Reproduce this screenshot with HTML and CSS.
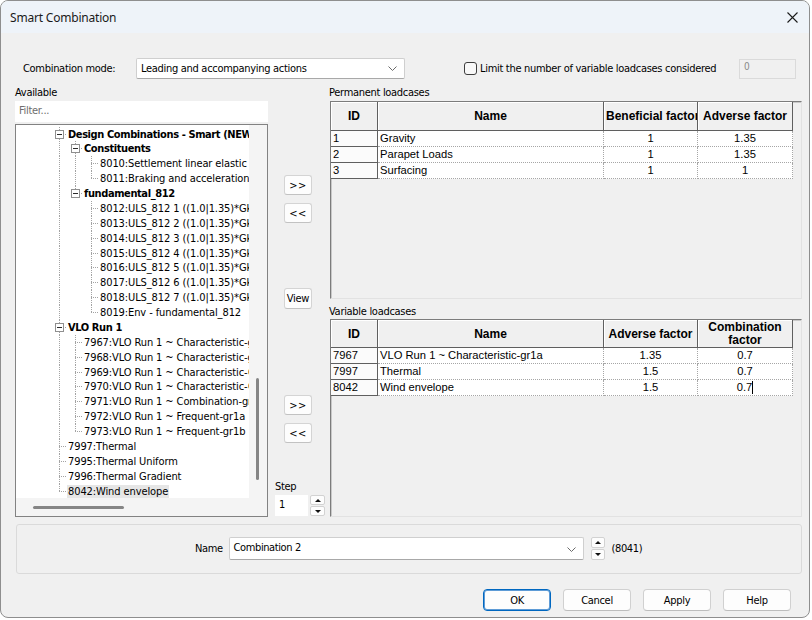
FILE: index.html
```html
<!DOCTYPE html>
<html lang="en">
<head>
    <meta charset="UTF-8">
    <title>Smart Combination</title>
    <link rel="stylesheet" href="styles.css">
</head>
<body>
<div class="window">
    <div class="titlebar">
        <span class="title">Smart Combination</span>
        <svg class="close" width="11" height="11" viewBox="0 0 11 11">
            <path d="M0.5 0.5 L10.5 10.5 M10.5 0.5 L0.5 10.5" stroke="#1b1b1b" stroke-width="1.1" fill="none"/>
        </svg>
    </div>

    <div class="body">
        <div class="mode-row">
            <span class="mode-label">Combination mode:</span>
            <div class="select">
                <span>Leading and accompanying actions</span>
                <svg width="9" height="5" viewBox="0 0 9 5"><path d="M0.5 0.5 L4.5 4.5 L8.5 0.5" stroke="#6a6a6a" fill="none"/></svg>
            </div>
            <span class="checkbox"></span>
            <span class="check-label">Limit the number of variable loadcases considered</span>
            <div class="limit-input">0</div>
        </div>

        <div class="main">
            <div class="col-left">
                <div class="label">Available</div>
                <div class="filter">Filter...</div>
                <div class="tree">
                    <div class="tree-list">
                        <div class="row"><i class="g"></i><i class="g"></i><i class="n tee"><b class="box"></b></i><span class="t bold">Design Combinations - Smart (NEW)</span></div>
                        <div class="row"><i class="g"></i><i class="g"></i><i class="g v"></i><i class="n tee"><b class="box"></b></i><span class="t bold">Constituents</span></div>
                        <div class="row"><i class="g"></i><i class="g"></i><i class="g v"></i><i class="g v"></i><i class="n tee"></i><span class="t">8010:Settlement linear elastic analysis</span></div>
                        <div class="row"><i class="g"></i><i class="g"></i><i class="g v"></i><i class="g v"></i><i class="n end"></i><span class="t">8011:Braking and acceleration Envelope</span></div>
                        <div class="row"><i class="g"></i><i class="g"></i><i class="g v"></i><i class="n end"><b class="box"></b></i><span class="t bold">fundamental_812</span></div>
                        <div class="row"><i class="g"></i><i class="g"></i><i class="g v"></i><i class="g"></i><i class="n tee"></i><span class="t">8012:ULS_812 1 ((1.0|1.35)*Gk</span></div>
                        <div class="row"><i class="g"></i><i class="g"></i><i class="g v"></i><i class="g"></i><i class="n tee"></i><span class="t">8013:ULS_812 2 ((1.0|1.35)*Gk</span></div>
                        <div class="row"><i class="g"></i><i class="g"></i><i class="g v"></i><i class="g"></i><i class="n tee"></i><span class="t">8014:ULS_812 3 ((1.0|1.35)*Gk</span></div>
                        <div class="row"><i class="g"></i><i class="g"></i><i class="g v"></i><i class="g"></i><i class="n tee"></i><span class="t">8015:ULS_812 4 ((1.0|1.35)*Gk</span></div>
                        <div class="row"><i class="g"></i><i class="g"></i><i class="g v"></i><i class="g"></i><i class="n tee"></i><span class="t">8016:ULS_812 5 ((1.0|1.35)*Gk</span></div>
                        <div class="row"><i class="g"></i><i class="g"></i><i class="g v"></i><i class="g"></i><i class="n tee"></i><span class="t">8017:ULS_812 6 ((1.0|1.35)*Gk</span></div>
                        <div class="row"><i class="g"></i><i class="g"></i><i class="g v"></i><i class="g"></i><i class="n tee"></i><span class="t">8018:ULS_812 7 ((1.0|1.35)*Gk</span></div>
                        <div class="row"><i class="g"></i><i class="g"></i><i class="g v"></i><i class="g"></i><i class="n end"></i><span class="t">8019:Env - fundamental_812</span></div>
                        <div class="row"><i class="g"></i><i class="g"></i><i class="n tee"><b class="box"></b></i><span class="t bold">VLO Run 1</span></div>
                        <div class="row"><i class="g"></i><i class="g"></i><i class="g v"></i><i class="n tee"></i><span class="t">7967:VLO Run 1 ~ Characteristic-gr1a</span></div>
                        <div class="row"><i class="g"></i><i class="g"></i><i class="g v"></i><i class="n tee"></i><span class="t">7968:VLO Run 1 ~ Characteristic-gr1b</span></div>
                        <div class="row"><i class="g"></i><i class="g"></i><i class="g v"></i><i class="n tee"></i><span class="t">7969:VLO Run 1 ~ Characteristic-Gr2</span></div>
                        <div class="row"><i class="g"></i><i class="g"></i><i class="g v"></i><i class="n tee"></i><span class="t">7970:VLO Run 1 ~ Characteristic-Gr3</span></div>
                        <div class="row"><i class="g"></i><i class="g"></i><i class="g v"></i><i class="n tee"></i><span class="t">7971:VLO Run 1 ~ Combination-gr1a</span></div>
                        <div class="row"><i class="g"></i><i class="g"></i><i class="g v"></i><i class="n tee"></i><span class="t">7972:VLO Run 1 ~ Frequent-gr1a</span></div>
                        <div class="row"><i class="g"></i><i class="g"></i><i class="g v"></i><i class="n end"></i><span class="t">7973:VLO Run 1 ~ Frequent-gr1b</span></div>
                        <div class="row"><i class="g"></i><i class="g"></i><i class="n tee"></i><span class="t">7997:Thermal</span></div>
                        <div class="row"><i class="g"></i><i class="g"></i><i class="n tee"></i><span class="t">7995:Thermal Uniform</span></div>
                        <div class="row"><i class="g"></i><i class="g"></i><i class="n tee"></i><span class="t">7996:Thermal Gradient</span></div>
                        <div class="row"><i class="g"></i><i class="g"></i><i class="n end"></i><span class="t selected">8042:Wind envelope</span></div>
                    </div>
                    <div class="vscroll"><div class="vthumb"></div></div>
                    <div class="hscroll"><div class="hthumb"></div></div>
                    <div class="corner"></div>
                </div>
            </div>

            <div class="col-mid">
                <button class="small-btn first">&gt;&gt;</button>
                <button class="small-btn near">&lt;&lt;</button>
                <button class="small-btn view">View</button>
                <button class="small-btn lower">&gt;&gt;</button>
                <button class="small-btn near">&lt;&lt;</button>
                <div class="step-label">Step</div>
                <div class="step-row">
                    <div class="step-input">1</div>
                    <div class="spin">
                        <span class="spin-up"></span>
                        <span class="spin-down"></span>
                    </div>
                </div>
            </div>

            <div class="col-right">
                <div class="label">Permanent loadcases</div>
                <div class="grid-box">
                    <div class="grid perm">
                        <div class="hd">ID</div>
                        <div class="hd">Name</div>
                        <div class="hd">Beneficial factor</div>
                        <div class="hd">Adverse factor</div>

                        <div class="rh">1</div><div class="cl">Gravity</div><div class="cl num">1</div><div class="cl num">1.35</div>
                        <div class="rh">2</div><div class="cl">Parapet Loads</div><div class="cl num">1</div><div class="cl num">1.35</div>
                        <div class="rh">3</div><div class="cl">Surfacing</div><div class="cl num">1</div><div class="cl num">1</div>
                    </div>
                </div>

                <div class="label second">Variable loadcases</div>
                <div class="grid-box">
                    <div class="grid var">
                        <div class="hd">ID</div>
                        <div class="hd">Name</div>
                        <div class="hd">Adverse factor</div>
                        <div class="hd two">Combination<br>factor</div>

                        <div class="rh">7967</div><div class="cl">VLO Run 1 ~ Characteristic-gr1a</div><div class="cl num">1.35</div><div class="cl num">0.7</div>
                        <div class="rh">7997</div><div class="cl">Thermal</div><div class="cl num">1.5</div><div class="cl num">0.7</div>
                        <div class="rh">8042</div><div class="cl">Wind envelope</div><div class="cl num">1.5</div><div class="cl num">0.7<span class="caret"></span></div>
                    </div>
                </div>
            </div>
        </div>

        <div class="name-group">
            <span class="name-label">Name</span>
            <div class="name-combo">
                <span>Combination 2</span>
                <svg width="9" height="5" viewBox="0 0 9 5"><path d="M0.5 0.5 L4.5 4.5 L8.5 0.5" stroke="#6a6a6a" fill="none"/></svg>
            </div>
            <div class="spin name-spin">
                <span class="spin-up"></span>
                <span class="spin-down"></span>
            </div>
            <span class="name-id">(8041)</span>
        </div>

        <div class="buttons">
            <button class="btn default">OK</button>
            <button class="btn">Cancel</button>
            <button class="btn">Apply</button>
            <button class="btn">Help</button>
        </div>
    </div>
</div>
</body>
</html>
```

FILE: styles.css
```css
body {
    margin: 0;
    background: #ffffff;
    font-family: "DejaVu Sans Condensed", "DejaVu Sans", sans-serif;
    font-size: 11px;
    letter-spacing: -0.3px;
    color: #000;
}
.window {
    width: 808px;
    height: 616px;
    border: 1px solid #8e8e8e;
    border-radius: 8px;
    background: #f0f0f0;
    overflow: hidden;
    display: flex;
    flex-direction: column;
}
.titlebar {
    height: 32px;
    flex: none;
    background: #eef3f9;
    display: flex;
    align-items: center;
    justify-content: space-between;
    padding: 0 11px 0 9px;
}
.title {
    font-family: "Noto Sans", sans-serif;
    font-size: 12px;
    letter-spacing: -0.2px;
    color: #1a1a1a;
}
.body {
    flex: 1;
    display: flex;
    flex-direction: column;
    padding: 0 6px 0 14px;
}

/* top row */
.mode-row {
    margin-top: 25px;
    height: 21px;
    display: flex;
    align-items: center;
}
.mode-label {
    width: 113px;
    margin-left: 8px;
}
.select, .name-combo {
    box-sizing: border-box;
    height: 21px;
    background: #fff;
    border: 1px solid #cfcfcf;
    border-bottom-color: #a8a8a8;
    border-radius: 2px;
    display: flex;
    align-items: center;
    justify-content: space-between;
    padding: 0 7px 0 4px;
}
.select {
    width: 269px;
}
.checkbox {
    box-sizing: border-box;
    width: 13px;
    height: 13px;
    margin-left: 59px;
    border: 1px solid #3e3e3e;
    border-radius: 3px;
    background: #f8f8f8;
}
.check-label {
    margin-left: 3px;
}
.limit-input {
    box-sizing: border-box;
    width: 57px;
    height: 20px;
    margin-left: auto;
    margin-right: 7px;
    border: 1px solid #dadada;
    color: #8a8a8a;
    padding: 1px 0 0 4px;
    font-size: 10px;
    align-self: flex-start;
    margin-top: 1px;
}

/* main area */
.main {
    margin-top: 7px;
    height: 431px;
    display: flex;
}
.label {
    height: 15px;
    line-height: 14px;
}
.col-left {
    width: 253px;
    flex: none;
}
.filter {
    height: 21px;
    background: #fff;
    color: #6d6d6d;
    line-height: 19px;
    padding-left: 4px;
}
.tree {
    box-sizing: border-box;
    margin-top: 2px;
    height: 393px;
    border: 1px solid #828282;
    display: grid;
    grid-template-columns: 233px 1fr;
    grid-template-rows: 1fr 18px;
}
.tree-list {
    background: #fff;
    overflow: hidden;
    padding: 1.6px 0 0 3px;
    letter-spacing: -0.1px;
}
.row {
    height: 14.875px;
    display: flex;
    align-items: center;
    white-space: nowrap;
}
.g, .n {
    flex: none;
    width: 16px;
    height: 100%;
    display: flex;
    align-items: center;
    justify-content: center;
    background-repeat: no-repeat;
}
.v {
    background-image: repeating-linear-gradient(to bottom, #a3a3a3 0 1px, transparent 1px 2px);
    background-size: 1px 100%;
    background-position: 8px 0;
}
.tee, .end {
    background-image:
        repeating-linear-gradient(to bottom, #a3a3a3 0 1px, transparent 1px 2px),
        repeating-linear-gradient(to right, #a3a3a3 0 1px, transparent 1px 2px);
    background-size: 1px 100%, 8px 1px;
    background-position: 8px 0, 8px 7px;
}
.end {
    background-size: 1px 8px, 8px 1px;
}
.box {
    box-sizing: border-box;
    width: 9px;
    height: 9px;
    border: 1px solid #8f8f8f;
    background: linear-gradient(#2b2b2b, #2b2b2b) center / 5px 1px no-repeat, #fff;
}
.t {
    padding-left: 1px;
}
.bold {
    font-weight: bold;
    letter-spacing: -0.4px;
}
.selected {
    background: #e6e6e6;
    padding-right: 1px;
}
.vscroll, .hscroll, .corner {
    background: #f4f4f4;
}
.vthumb {
    width: 3px;
    height: 102px;
    margin: 253px 0 0 7px;
    background: #858585;
    border-radius: 2px;
}
.hthumb {
    width: 91px;
    height: 3px;
    margin: 8px 0 0 17px;
    background: #858585;
    border-radius: 2px;
}

/* middle buttons */
.col-mid {
    width: 61px;
    flex: none;
    display: flex;
    flex-direction: column;
    align-items: flex-start;
}
.small-btn {
    box-sizing: border-box;
    width: 28px;
    height: 20px;
    margin-left: 16px;
    padding: 0;
    background: #fdfdfd;
    border: 1px solid #d4d4d4;
    border-bottom-color: #c2c2c2;
    border-radius: 3px;
    font-family: inherit;
    font-size: 11px;
    letter-spacing: 0.5px;
    color: #000;
}
.small-btn.view { letter-spacing: -0.3px; }
.small-btn.first { margin-top: 89px; }
.small-btn.near { margin-top: 8px; }
.small-btn.view { margin-top: 65px; height: 21px; }
.small-btn.lower { margin-top: 86px; }
.step-label {
    margin: 37px 0 0 7px;
    height: 14px;
    line-height: 14px;
}
.step-row {
    display: flex;
    margin: 1px 0 0 7px;
}
.step-input {
    width: 29px;
    height: 21px;
    background: #fff;
    padding-left: 4px;
    line-height: 20px;
}
.spin {
    margin-left: 2px;
    width: 15px;
    display: flex;
    flex-direction: column;
    gap: 1px;
}
.spin-up, .spin-down {
    box-sizing: border-box;
    flex: 1;
    background: #fdfdfd;
    border: 1px solid #d2d2d2;
    border-radius: 2px;
    display: flex;
    align-items: center;
    justify-content: center;
}
.spin-up::before, .spin-down::before {
    content: "";
    border-left: 3px solid transparent;
    border-right: 3px solid transparent;
}
.spin-up::before { border-bottom: 3px solid #111; }
.spin-down::before { border-top: 3px solid #111; }

/* grids */
.col-right {
    width: 473px;
    flex: none;
}
.label.second {
    margin-top: 6px;
    height: 14px;
}
.grid-box {
    box-sizing: border-box;
    margin-left: 1px;
    width: 472px;
    height: 198px;
    border: 1px solid;
    border-color: #7c7c7c #e2e2e2 #e2e2e2 #7c7c7c;
    box-shadow: inset 1px 1px 0 #c8c8c8;
    background: #f0f0f0;
}
.grid {
    display: grid;
    grid-template-columns: 47px 226px 94px 95px;
    grid-auto-rows: 16px;
    font-family: "Liberation Sans", Arial, sans-serif;
    font-size: 11.2px;
    letter-spacing: 0;
}
.grid.perm { grid-template-rows: 29px; }
.grid.var { grid-template-rows: 28px; }
.hd, .rh, .cl {
    box-sizing: border-box;
    overflow: hidden;
    white-space: nowrap;
}
.hd {
    display: flex;
    flex-direction: column;
    justify-content: center;
    text-align: center;
    padding: 0 2px;
    font-size: 12px;
    font-weight: bold;
    background: #f0f0f0;
    border-right: 1px solid #5f5f5f;
    border-bottom: 1px solid #5f5f5f;
    box-shadow: inset 1px 1px 0 #ffffff;
}
.hd.two {
    white-space: normal;
    line-height: 13px;
    padding-top: 1px;
}
.rh {
    background: #fbfbfb;
    border-right: 1px solid #5f5f5f;
    border-bottom: 1px solid #5f5f5f;
    padding-left: 2px;
    line-height: 15px;
}
.cl {
    background: #fff;
    border-right: 1px dotted #a6a6a6;
    border-bottom: 1px dotted #a6a6a6;
    padding-left: 2px;
    line-height: 15px;
}
.num {
    text-align: center;
    padding-left: 0;
}
.caret {
    display: inline-block;
    width: 1px;
    height: 13px;
    background: #000;
    vertical-align: -3px;
}

/* name group */
.name-group {
    box-sizing: border-box;
    margin: 7px 1px 0 1px;
    height: 50px;
    border: 1px solid #dadada;
    border-radius: 3px;
    display: flex;
    align-items: center;
    padding: 0 0 2px 178px;
    font-family: "DejaVu Sans Condensed", sans-serif;
    font-size: 11px;
    letter-spacing: -0.4px;
}
.name-combo {
    width: 355px;
    height: 23px;
    margin-left: 6px;
    align-items: flex-start;
    padding: 3px 7px 0 4px;
}
.name-combo svg {
    margin-top: 6px;
}
.name-spin {
    height: 23px;
    width: 14px;
    margin-left: 7px;
}
.name-id {
    margin-left: 7px;
}

/* dialog buttons */
.buttons {
    margin-top: 15px;
    display: flex;
    justify-content: flex-end;
    gap: 12px;
    padding-right: 12px;
}
.btn {
    box-sizing: border-box;
    width: 68px;
    height: 22px;
    background: #fdfdfd;
    border: 1px solid #d0d0d0;
    border-bottom-color: #bdbdbd;
    border-radius: 4px;
    font-family: "DejaVu Sans Condensed", sans-serif;
    font-size: 11px;
    letter-spacing: -0.3px;
    color: #000;
    padding: 0;
}
.btn.default {
    border: 1px solid #0067c0;
    box-shadow: inset 0 0 0 1px #5e9bd6;
}
```
